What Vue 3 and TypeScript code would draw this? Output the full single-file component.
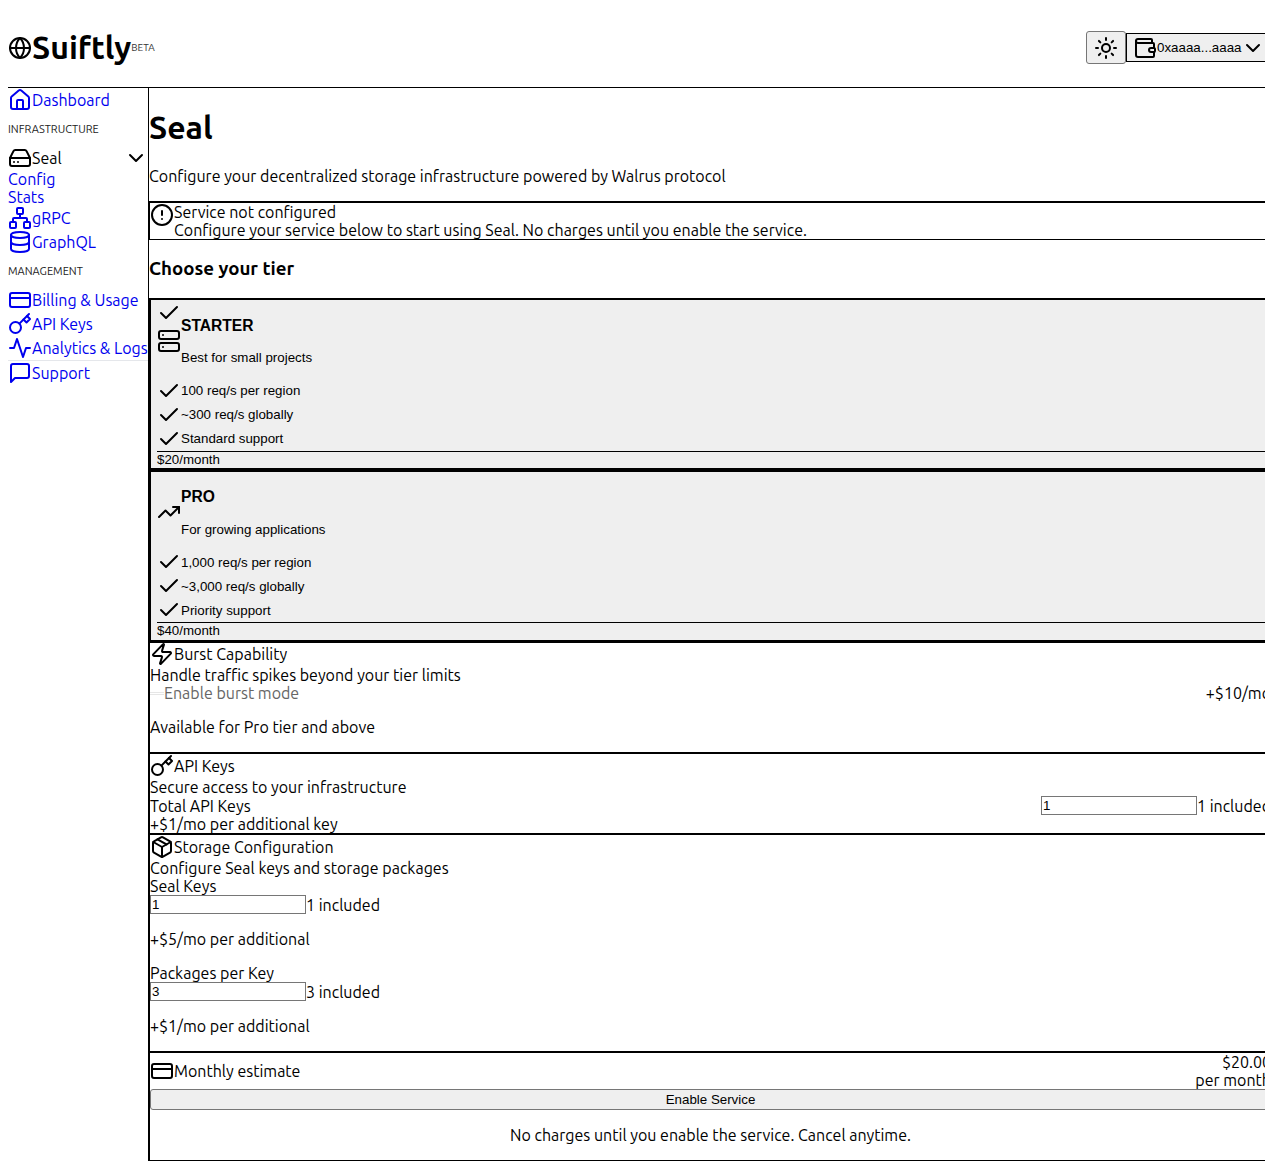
<template>
  <div class="viewport">
    <div class="shell">
      <header class="topbar">
        <div class="brand">
          <svg class="icon" viewBox="0 0 24 24" v-html="icons.globe"></svg>
          <span class="brand-name">Suiftly</span>
          <span class="beta">BETA</span>
        </div>
        <div class="top-actions">
          <button class="theme-btn" type="button">
            <svg class="icon" viewBox="0 0 24 24" v-html="icons.sun"></svg>
          </button>
          <button class="wallet-btn" type="button">
            <svg class="icon" viewBox="0 0 24 24" v-html="icons.wallet"></svg>
            <span>0xaaaa...aaaa</span>
            <svg class="icon" viewBox="0 0 24 24" v-html="icons.chevron"></svg>
          </button>
        </div>
      </header>

      <div class="body-row">
        <nav class="sidebar">
          <a class="nav-link" href="#"><svg class="icon" viewBox="0 0 24 24" v-html="icons.house"></svg>Dashboard</a>
          <div class="nav-group">INFRASTRUCTURE</div>
          <div class="nav-parent">
            <svg class="icon" viewBox="0 0 24 24" v-html="icons.drive"></svg>
            <span>Seal</span>
            <svg class="icon chev" viewBox="0 0 24 24" v-html="icons.chevron"></svg>
          </div>
          <a class="sub-link" href="#">Config</a>
          <a class="sub-link" href="#">Stats</a>
          <a class="nav-link" href="#"><svg class="icon" viewBox="0 0 24 24" v-html="icons.network"></svg>gRPC</a>
          <a class="nav-link" href="#"><svg class="icon" viewBox="0 0 24 24" v-html="icons.database"></svg>GraphQL</a>
          <div class="nav-group">MANAGEMENT</div>
          <a class="nav-link" href="#"><svg class="icon" viewBox="0 0 24 24" v-html="icons.card"></svg>Billing &amp; Usage</a>
          <a class="nav-link" href="#"><svg class="icon" viewBox="0 0 24 24" v-html="icons.key"></svg>API Keys</a>
          <a class="nav-link" href="#"><svg class="icon" viewBox="0 0 24 24" v-html="icons.activity"></svg>Analytics &amp; Logs</a>
          <div class="nav-rule"></div>
          <a class="nav-link" href="#"><svg class="icon" viewBox="0 0 24 24" v-html="icons.message"></svg>Support</a>
        </nav>

        <main class="content">
          <h1 class="page-title">Seal</h1>
          <p class="page-sub">Configure your decentralized storage infrastructure powered by Walrus protocol</p>

          <div class="alert">
            <svg class="icon" viewBox="0 0 24 24" v-html="icons.alert"></svg>
            <div>
              <div>Service not configured</div>
              <div>Configure your service below to start using Seal. No charges until you enable the service.</div>
            </div>
          </div>

          <h2 class="tier-heading">Choose your tier</h2>

          <button
            v-for="tier in tiers"
            :key="tier.name"
            class="tier-card"
            :class="{ selected: tier.selected }"
            type="button"
          >
            <svg v-if="tier.selected" class="icon tier-check" viewBox="0 0 24 24" v-html="icons.check"></svg>
            <div class="tier-head">
              <svg class="icon" viewBox="0 0 24 24" v-html="icons[tier.icon]"></svg>
              <div>
                <div class="tier-name">{{ tier.name }}</div>
                <div class="tier-desc">{{ tier.desc }}</div>
              </div>
            </div>
            <div v-for="f in tier.features" :key="f" class="tier-feature">
              <svg class="icon" viewBox="0 0 24 24" v-html="icons.check"></svg>
              <span>{{ f }}</span>
            </div>
            <div class="tier-price">{{ tier.price }}</div>
          </button>

          <section class="panel burst">
            <div class="panel-title"><svg class="icon" viewBox="0 0 24 24" v-html="icons.zap"></svg>Burst Capability</div>
            <div>Handle traffic spikes beyond your tier limits</div>
            <div class="spread">
              <label class="muted"><span class="fake-check"></span>Enable burst mode</label>
              <span>+$10/mo</span>
            </div>
            <p class="burst-note">Available for Pro tier and above</p>
          </section>

          <section class="panel api">
            <div class="panel-title"><svg class="icon" viewBox="0 0 24 24" v-html="icons.key"></svg>API Keys</div>
            <div>Secure access to your infrastructure</div>
            <div class="spread api-row">
              <span>Total API Keys</span>
              <span class="field"><input value="1" type="number" />1 included</span>
            </div>
            <div>+$1/mo per additional key</div>
          </section>

          <section class="panel storage">
            <div class="panel-title"><svg class="icon" viewBox="0 0 24 24" v-html="icons.package"></svg>Storage Configuration</div>
            <div>Configure Seal keys and storage packages</div>
            <div v-for="s in storage" :key="s.label">
              <div>{{ s.label }}</div>
              <div class="field"><input :value="s.value" type="number" />{{ s.included }}</div>
              <p class="store-extra">{{ s.extra }}</p>
            </div>
          </section>

          <section class="panel estimate">
            <div class="estimate-row">
              <div class="panel-title"><svg class="icon" viewBox="0 0 24 24" v-html="icons.card"></svg>Monthly estimate</div>
              <div class="estimate-total">
                <div>$20.00</div>
                <div>per month</div>
              </div>
            </div>
            <button class="enable-btn" type="button">Enable Service</button>
            <p class="estimate-note">No charges until you enable the service. Cancel anytime.</p>
          </section>
        </main>
      </div>
    </div>
  </div>
</template>

<script setup lang="ts">
const icons: Record<string, string> = {
  globe: '<circle cx="12" cy="12" r="10"/><path d="M12 2a14.5 14.5 0 0 0 0 20 14.5 14.5 0 0 0 0-20"/><path d="M2 12h20"/>',
  sun: '<circle cx="12" cy="12" r="4"/><path d="M12 2v2"/><path d="M12 20v2"/><path d="m4.93 4.93 1.41 1.41"/><path d="m17.66 17.66 1.41 1.41"/><path d="M2 12h2"/><path d="M20 12h2"/><path d="m6.34 17.66-1.41 1.41"/><path d="m19.07 4.93-1.41 1.41"/>',
  wallet: '<path d="M19 7V4a1 1 0 0 0-1-1H5a2 2 0 0 0 0 4h15a1 1 0 0 1 1 1v4h-3a2 2 0 0 0 0 4h3a1 1 0 0 0 1-1v-2a1 1 0 0 0-1-1"/><path d="M3 5v14a2 2 0 0 0 2 2h15a1 1 0 0 0 1-1v-4"/>',
  chevron: '<path d="m6 9 6 6 6-6"/>',
  house: '<path d="M15 21v-8a1 1 0 0 0-1-1h-4a1 1 0 0 0-1 1v8"/><path d="M3 10a2 2 0 0 1 .709-1.528l7-5.999a2 2 0 0 1 2.582 0l7 5.999A2 2 0 0 1 21 10v9a2 2 0 0 1-2 2H5a2 2 0 0 1-2-2z"/>',
  drive: '<line x1="22" x2="2" y1="12" y2="12"/><path d="M5.45 5.11 2 12v6a2 2 0 0 0 2 2h16a2 2 0 0 0 2-2v-6l-3.45-6.89A2 2 0 0 0 16.76 4H7.24a2 2 0 0 0-1.79 1.11z"/><line x1="6" x2="6.01" y1="16" y2="16"/><line x1="10" x2="10.01" y1="16" y2="16"/>',
  network: '<rect x="16" y="16" width="6" height="6" rx="1"/><rect x="2" y="16" width="6" height="6" rx="1"/><rect x="9" y="2" width="6" height="6" rx="1"/><path d="M5 16v-3a1 1 0 0 1 1-1h12a1 1 0 0 1 1 1v3"/><path d="M12 12V8"/>',
  database: '<ellipse cx="12" cy="5" rx="9" ry="3"/><path d="M3 5V19A9 3 0 0 0 21 19V5"/><path d="M3 12A9 3 0 0 0 21 12"/>',
  card: '<rect width="20" height="14" x="2" y="5" rx="2"/><line x1="2" x2="22" y1="10" y2="10"/>',
  key: '<circle cx="7.5" cy="15.5" r="5.5"/><path d="m21 2-9.6 9.6"/><path d="m15.5 7.5 3 3L22 7l-3-3"/>',
  activity: '<path d="M22 12h-4l-3 9L9 3l-3 9H2"/>',
  message: '<path d="M21 15a2 2 0 0 1-2 2H7l-4 4V5a2 2 0 0 1 2-2h14a2 2 0 0 1 2 2z"/>',
  alert: '<circle cx="12" cy="12" r="10"/><line x1="12" x2="12" y1="8" y2="12"/><line x1="12" x2="12.01" y1="16" y2="16"/>',
  check: '<path d="M20 6 9 17l-5-5"/>',
  server: '<rect width="20" height="8" x="2" y="2" rx="2"/><rect width="20" height="8" x="2" y="14" rx="2"/><line x1="6" x2="6.01" y1="6" y2="6"/><line x1="6" x2="6.01" y1="18" y2="18"/>',
  trending: '<polyline points="22 7 13.5 15.5 8.5 10.5 2 17"/><polyline points="16 7 22 7 22 13"/>',
  zap: '<path d="M4 14a1 1 0 0 1-.78-1.63l9.9-10.2a.5.5 0 0 1 .86.46l-1.92 6.02A1 1 0 0 0 13 10h7a1 1 0 0 1 .78 1.63l-9.9 10.2a.5.5 0 0 1-.86-.46l1.92-6.02A1 1 0 0 0 11 14z"/>',
  package: '<path d="M11 21.73a2 2 0 0 0 2 0l7-4A2 2 0 0 0 21 16V8a2 2 0 0 0-1-1.73l-7-4a2 2 0 0 0-2 0l-7 4A2 2 0 0 0 3 8v8a2 2 0 0 0 1 1.73z"/><path d="M12 22V12"/><path d="m3.3 7 8.7 5 8.7-5"/><path d="m7.5 4.27 9 5.15"/>',
};

interface Tier {
  name: string;
  desc: string;
  icon: string;
  selected: boolean;
  features: string[];
  price: string;
}

const tiers: Tier[] = [
  {
    name: 'STARTER',
    desc: 'Best for small projects',
    icon: 'server',
    selected: true,
    features: ['100 req/s per region', '~300 req/s globally', 'Standard support'],
    price: '$20/month',
  },
  {
    name: 'PRO',
    desc: 'For growing applications',
    icon: 'trending',
    selected: false,
    features: ['1,000 req/s per region', '~3,000 req/s globally', 'Priority support'],
    price: '$40/month',
  },
];

const storage = [
  { label: 'Seal Keys', value: 1, included: '1 included', extra: '+$5/mo per additional' },
  { label: 'Packages per Key', value: 3, included: '3 included', extra: '+$1/mo per additional' },
];
</script>

<style>
html,
body {
  margin: 0;
  background: #fff;
}
</style>

<style scoped>
.viewport {
  width: 1265px;
  height: 1169px;
  overflow: hidden;
  font-family: Ubuntu, Lato, "Liberation Sans", sans-serif;
  font-size: 16px;
  line-height: 18.4px;
  color: #000;
}

.shell {
  width: 1271px;
  box-sizing: border-box;
  padding-left: 8px;
}

.icon {
  width: 24px;
  height: 24px;
  flex: none;
  display: block;
  fill: none;
  stroke: currentColor;
  stroke-width: 2;
  stroke-linecap: round;
  stroke-linejoin: round;
}

.topbar {
  height: 79px;
  padding-top: 8px;
  border-bottom: 1px solid #000;
  display: flex;
  align-items: center;
  justify-content: space-between;
}

.brand {
  display: flex;
  align-items: center;
}

.brand-name {
  font-size: 32px;
  font-weight: 700;
  line-height: 37px;
}

.beta {
  font-size: 10px;
  color: #333;
  line-height: 12px;
}

.top-actions {
  display: flex;
  align-items: center;
}

.theme-btn {
  width: 40px;
  height: 33px;
  padding: 0;
  display: flex;
  align-items: center;
  justify-content: center;
  background: #efefef;
  border: 1px solid #767676;
  border-radius: 3px;
  color: #000;
}

.wallet-btn {
  width: 145px;
  height: 29px;
  padding: 0 0 0 6px;
  display: flex;
  align-items: center;
  background: #efefef;
  border: 1px solid #000;
  border-radius: 0;
  color: #000;
  font: 13.33px "Liberation Sans", sans-serif;
}

.wallet-btn span {
  margin-right: -1px;
}

.body-row {
  display: flex;
}

.sidebar {
  width: 140px;
  flex: none;
  border-right: 1px solid #000;
}

.nav-link {
  display: flex;
  align-items: center;
  height: 24px;
  color: #00e;
  text-decoration: none;
  white-space: nowrap;
}

.sub-link {
  display: block;
  height: 18px;
  color: #00e;
  text-decoration: none;
}

.nav-group {
  height: 34px;
  line-height: 34px;
  font-size: 11px;
  color: #222;
}

.nav-parent {
  display: flex;
  align-items: center;
  height: 24px;
}

.chev {
  margin-left: auto;
}

.nav-rule {
  height: 1px;
  background: #e5e7eb;
}

.content {
  flex: 1;
  min-width: 0;
}

.page-title {
  margin: 21.44px 0;
  font-size: 32px;
  line-height: 36px;
  font-weight: 700;
}

.page-sub {
  margin: 0 0 16px;
}

.alert {
  display: flex;
  align-items: flex-start;
  height: 36px;
  border-top: 2px solid #000;
  border-bottom: 1px solid #000;
  border-left: 1px solid #000;
  line-height: 18px;
}

.tier-heading {
  margin: 18px 0 19.1px;
  font-size: 18.72px;
  line-height: 21px;
  font-weight: 700;
}

.tier-card {
  position: relative;
  display: block;
  width: 100%;
  box-sizing: border-box;
  padding: 15.6px 0 0 6px;
  margin: 0;
  text-align: left;
  background: #efefef;
  border: 2px solid #000;
  border-radius: 0;
  color: #000;
  font: 13.33px "Liberation Sans", sans-serif;
}

.tier-card.selected {
  padding-top: 16.4px;
}

.tier-check {
  position: absolute;
  left: 6px;
  top: 1px;
}

.tier-head {
  display: flex;
  align-items: center;
  margin-bottom: 13.33px;
}

.tier-name {
  font-size: 15.6px;
  font-weight: 700;
  line-height: 18px;
}

.tier-desc {
  margin-top: 15.6px;
  line-height: 15px;
}

.tier-feature {
  display: flex;
  align-items: center;
  height: 24px;
}

.tier-price {
  border-top: 1px solid #000;
  line-height: 16.8px;
}

.panel {
  border-bottom: 2px solid #000;
  border-left: 1px solid #000;
}

.panel-title {
  display: flex;
  align-items: flex-start;
  height: 24px;
  line-height: 25px;
}

.spread {
  display: flex;
  justify-content: space-between;
  align-items: center;
}

.muted {
  color: #666;
  display: flex;
  align-items: center;
}

.fake-check {
  width: 14px;
  height: 3px;
  border-top: 1px solid #e6e6e6;
  border-bottom: 1px solid #e6e6e6;
  box-sizing: border-box;
}

.burst {
  height: 109px;
  border-top: 1px solid #000;
}

.burst .panel-title {
  margin-top: -1px;
}

.burst-note {
  margin: 15.4px 0 0;
}

.api {
  height: 79px;
}

.api-row {
  margin-top: 0.4px;
}

.field {
  display: flex;
  align-items: center;
  height: 18.8px;
}

.field input {
  width: 156px;
  height: 19px;
  flex: none;
  margin-top: -1px;
  box-sizing: border-box;
  padding: 1px 2px 1px 1px;
  border: 1px solid #767676;
  font: 13.33px "Liberation Sans", sans-serif;
  background: #fff;
  appearance: textfield;
}

.storage {
  height: 216px;
}

.store-extra {
  margin: 15.6px 0 16px;
}

.estimate {
  border-bottom: 1px solid #000;
}

.estimate-row {
  display: flex;
  justify-content: space-between;
  align-items: center;
  height: 36px;
}

.estimate-total {
  text-align: right;
  padding-top: 1px;
}

.enable-btn {
  display: block;
  width: 100%;
  height: 21px;
  padding: 0;
  background: #efefef;
  border: 1px solid #767676;
  border-radius: 3px;
  color: #000;
  font: 13.33px "Liberation Sans", sans-serif;
}

.estimate-note {
  margin: 16px 0;
  text-align: center;
}
</style>
